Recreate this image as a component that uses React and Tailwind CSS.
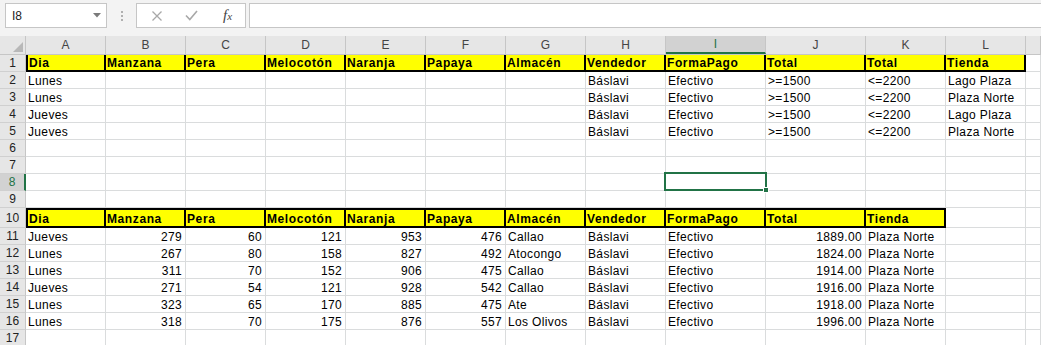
import React from "react";

const W = [
  "w-[80px]", "w-[80px]", "w-[80px]", "w-[80px]", "w-[80px]", "w-[80px]", "w-[80px]", "w-[80px]",
  "w-[100px]", "w-[100px]", "w-[80px]", "w-[80px]", "flex-1",
];
const LETTERS = ["A", "B", "C", "D", "E", "F", "G", "H", "I", "J", "K", "L", ""];

const H1 = ["Dia", "Manzana", "Pera", "Melocotón", "Naranja", "Papaya", "Almacén", "Vendedor", "FormaPago", "Total", "Total", "Tienda"];
const H10 = ["Dia", "Manzana", "Pera", "Melocotón", "Naranja", "Papaya", "Almacén", "Vendedor", "FormaPago", "Total", "Tienda"];

const crit = [
  ["Lunes", "Lago Plaza"],
  ["Lunes", "Plaza Norte"],
  ["Jueves", "Lago Plaza"],
  ["Jueves", "Plaza Norte"],
];

const data = [
  ["Jueves", 279, 60, 121, 953, 476, "Callao", "1889.00"],
  ["Lunes", 267, 80, 158, 827, 492, "Atocongo", "1824.00"],
  ["Lunes", 311, 70, 152, 906, 475, "Callao", "1914.00"],
  ["Jueves", 271, 54, 121, 928, 542, "Callao", "1916.00"],
  ["Lunes", 323, 65, 170, 885, 475, "Ate", "1918.00"],
  ["Lunes", 318, 70, 175, 876, 557, "Los Olivos", "1996.00"],
];

function buildRows() {
  const rows = [];
  rows.push({ n: 1, h: "h-[17px]", yellow: H1.length, top: false, cells: H1.concat(Array(13 - H1.length).fill("")) });
  crit.forEach(([d, t], i) => {
    const c = Array(13).fill("");
    c[0] = d; c[7] = "Báslavi"; c[8] = "Efectivo"; c[9] = ">=1500"; c[10] = "<=2200"; c[11] = t;
    rows.push({ n: 2 + i, h: "h-[17px]", cells: c });
  });
  for (let n = 6; n <= 9; n++) rows.push({ n, h: "h-[17px]", cells: Array(13).fill("") });
  rows.push({ n: 10, h: "h-[20px]", yellow: H10.length, top: true, cells: H10.concat(Array(13 - H10.length).fill("")) });
  data.forEach((r, i) => {
    const c = Array(13).fill("");
    c[0] = r[0];
    c[1] = { v: r[1], right: true };
    c[2] = { v: r[2], right: true };
    c[3] = { v: r[3], right: true };
    c[4] = { v: r[4], right: true };
    c[5] = { v: r[5], right: true };
    c[6] = r[6];
    c[7] = "Báslavi";
    c[8] = "Efectivo";
    c[9] = { v: r[7], right: true };
    c[10] = "Plaza Norte";
    rows.push({ n: 11 + i, h: "h-[17px]", cells: c });
  });
  rows.push({ n: 17, h: "h-[17px]", cells: Array(13).fill("") });
  return rows;
}

const ROWS = buildRows();

function XIcon() {
  return (
    <svg width="12" height="12" viewBox="0 0 12 12">
      <path d="M1.5 1.5 L10.5 10.5 M10.5 1.5 L1.5 10.5" stroke="#a8a8a8" strokeWidth="1.3" fill="none" />
    </svg>
  );
}
function CheckIcon() {
  return (
    <svg width="13" height="11" viewBox="0 0 13 11">
      <path d="M1 5.5 L4.8 9.5 L12 1" stroke="#a8a8a8" strokeWidth="1.6" fill="none" />
    </svg>
  );
}

function Cell({ w, value, yellow, yFirst, yTop, selected }) {
  const v = typeof value === "object" && value !== null ? value.v : value;
  const right = typeof value === "object" && value !== null ? value.right : false;
  if (yellow) {
    return (
      <div
        className={`${w} shrink-0 h-full bg-[#ffff00] border-r-2 border-b-2 border-black ${yFirst ? "border-l-2" : ""} ${yTop ? "border-t-2" : ""} flex items-end pl-[1px] overflow-hidden whitespace-nowrap`}
      >
        <span className="text-[12px] leading-[14px] font-bold tracking-[0.6px] text-black">{v}</span>
      </div>
    );
  }
  return (
    <div
      className={`${w} relative shrink-0 h-full border-r border-b border-[#dadcdd] flex items-end ${right ? "justify-end pr-[3px]" : "pl-[2px]"} whitespace-nowrap`}
    >
      <span className="text-[12px] leading-[14px] tracking-[0.35px] text-black">{v}</span>
      {selected && (
        <div className="absolute -left-[2px] -top-[2px] w-[103px] h-[19px] border-2 border-[#217346] pointer-events-none z-10">
          <div className="absolute -right-[4px] -bottom-[4px] w-[6px] h-[6px] bg-[#217346] border border-white" />
        </div>
      )}
    </div>
  );
}

export default function App() {
  return (
    <div className="w-[1041px] h-[345px] overflow-hidden bg-white" style={{ fontFamily: '"Liberation Sans", Arial, sans-serif' }}>
      {/* formula bar */}
      <div className="h-[36px] bg-[#f3f3f3] flex items-start pt-[3px]">
        <div className="ml-[5px] w-[102px] h-[25px] bg-white border border-[#c6c6c6] flex items-center justify-between pl-[6px] pr-[5px]">
          <span className="text-[12px] text-[#222]">I8</span>
          <svg width="8" height="5" viewBox="0 0 8 5">
            <path d="M0 0 L8 0 L4 4.5 Z" fill="#7a7a7a" />
          </svg>
        </div>
        <div className="ml-[14px] h-[25px] flex flex-col items-center justify-center gap-[2px]">
          <div className="w-[2px] h-[2px] bg-[#b0b0b0]" />
          <div className="w-[2px] h-[2px] bg-[#b0b0b0]" />
          <div className="w-[2px] h-[2px] bg-[#b0b0b0]" />
        </div>
        <div className="ml-[13px] w-[110px] h-[25px] bg-white border border-[#c6c6c6] flex items-center">
          <div className="ml-[14px]"><XIcon /></div>
          <div className="ml-[22px]"><CheckIcon /></div>
          <span
            className="ml-[25px] text-[15px] italic text-[#444] leading-none"
            style={{ fontFamily: '"Liberation Serif", "Times New Roman", serif' }}
          >
            f<span className="text-[11px]">x</span>
          </span>
        </div>
        <div className="ml-[3px] flex-1 h-[25px] bg-white border border-r-0 border-[#c6c6c6]" />
      </div>

      {/* column headers */}
      <div className="h-[19px] flex bg-[#e6e6e6] border-b border-[#c6c6c6]">
        <div className="w-[26px] shrink-0 h-full border-r border-[#c6c6c6] flex items-end justify-end pr-[2px] pb-[2px]">
          <svg width="10" height="10" viewBox="0 0 10 10">
            <path d="M10 0 L10 10 L0 10 Z" fill="#b8b8b8" />
          </svg>
        </div>
        {LETTERS.map((l, i) => (
          <div
            key={i}
            className={`${W[i]} shrink-0 h-full flex items-center justify-center text-[12px] ${
              i === 8
                ? "bg-[#d2d2d2] border-b-2 border-[#217346] text-[#217346] border-r border-r-[#c6c6c6]"
                : "text-[#444] border-r border-[#c6c6c6]"
            }`}
          >
            {l}
          </div>
        ))}
      </div>

      {/* rows */}
      {ROWS.map((row) => (
        <div key={row.n} className={`${row.h} flex`}>
          <div
            className={`w-[26px] shrink-0 h-full flex items-center justify-center text-[12px] border-b border-[#d0d0d0] ${
              row.n === 8
                ? "bg-[#d2d2d2] text-[#217346] border-r-2 border-r-[#217346]"
                : "bg-[#e6e6e6] text-[#222] border-r border-r-[#c6c6c6]"
            }`}
          >
            {row.n}
          </div>
          {row.cells.map((c, i) => (
            <Cell
              key={i}
              w={W[i]}
              value={c}
              yellow={row.yellow && i < row.yellow}
              yFirst={i === 0}
              yTop={row.top}
              selected={row.n === 8 && i === 8}
            />
          ))}
        </div>
      ))}
    </div>
  );
}
